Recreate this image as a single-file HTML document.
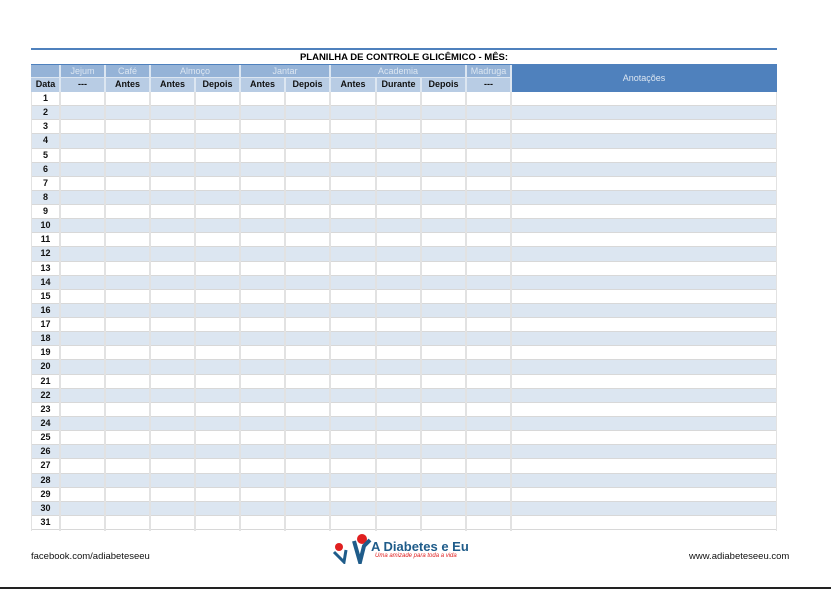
<!DOCTYPE html>
<html><head><meta charset="utf-8"><style>
body{margin:0;width:831px;height:589px;background:#fff;position:relative;overflow:hidden;font-family:"Liberation Sans",sans-serif;}
.a{position:absolute;}
.c{position:absolute;text-align:center;font-size:9px;line-height:13px;}
.r{position:absolute;left:31px;width:746px;height:14.13px;border-bottom:1px solid #d8d8d8;box-sizing:border-box;font-size:9px;font-weight:bold;color:#111;}
.r span{position:absolute;left:0;width:29px;text-align:center;line-height:13px;}
.o{background:#dce6f1;}
.v{position:absolute;top:92px;height:439px;width:2px;background:#e2e2e2;}
.hv{position:absolute;width:2px;background:#dce6f1;}
.h1{background:#95b3d7;color:#dce6f1;top:65px;height:12px;line-height:12px;}
.h2{background:#b8cce4;color:#111;top:77px;height:15px;line-height:15px;font-weight:bold;}
</style></head><body>
<div class="a" style="left:31px;top:48px;width:746px;height:2px;background:#4f81bd"></div>
<div class="a" style="left:31px;top:51px;width:746px;text-align:center;font-size:9.5px;font-weight:bold;line-height:13px">PLANILHA DE CONTROLE GLICÊMICO - MÊS:</div>
<div class="a" style="left:31px;top:64px;width:746px;height:1px;background:#4f81bd"></div>

<div class="c h1" style="left:31px;width:29px"></div>
<div class="c h1" style="left:60px;width:45px">Jejum</div>
<div class="c h1" style="left:105px;width:45px">Café</div>
<div class="c h1" style="left:150px;width:90px">Almoço</div>
<div class="c h1" style="left:240px;width:90px">Jantar</div>
<div class="c h1" style="left:330px;width:136px">Academia</div>
<div class="c h1" style="left:466px;width:45px">Madruga</div>
<div class="c h2" style="left:31px;width:29px">Data</div>
<div class="c h2" style="left:60px;width:45px">---</div>
<div class="c h2" style="left:105px;width:45px">Antes</div>
<div class="c h2" style="left:150px;width:45px">Antes</div>
<div class="c h2" style="left:195px;width:45px">Depois</div>
<div class="c h2" style="left:240px;width:45px">Antes</div>
<div class="c h2" style="left:285px;width:45px">Depois</div>
<div class="c h2" style="left:330px;width:46px">Antes</div>
<div class="c h2" style="left:376px;width:45px">Durante</div>
<div class="c h2" style="left:421px;width:45px">Depois</div>
<div class="c h2" style="left:466px;width:45px">---</div>
<div class="c" style="left:511px;top:65px;width:266px;height:27px;line-height:27px;background:#4f81bd;color:#dce6f1">Anotações</div>

<div class="hv" style="left:59px;top:65px;height:27px"></div>
<div class="hv" style="left:104px;top:65px;height:27px"></div>
<div class="hv" style="left:149px;top:65px;height:27px"></div>
<div class="hv" style="left:194px;top:77px;height:15px"></div>
<div class="hv" style="left:239px;top:65px;height:27px"></div>
<div class="hv" style="left:284px;top:77px;height:15px"></div>
<div class="hv" style="left:329px;top:65px;height:27px"></div>
<div class="hv" style="left:375px;top:77px;height:15px"></div>
<div class="hv" style="left:420px;top:77px;height:15px"></div>
<div class="hv" style="left:465px;top:65px;height:27px"></div>
<div class="hv" style="left:510px;top:65px;height:27px"></div>
<div class="a" style="left:31px;top:77px;width:480px;height:1px;background:#dce6f1"></div>

<div class="r" style="top:92px"><span>1</span></div>
<div class="r o" style="top:106.13px"><span>2</span></div>
<div class="r" style="top:120.26px"><span>3</span></div>
<div class="r o" style="top:134.39px"><span>4</span></div>
<div class="r" style="top:148.52px"><span>5</span></div>
<div class="r o" style="top:162.65px"><span>6</span></div>
<div class="r" style="top:176.78px"><span>7</span></div>
<div class="r o" style="top:190.91px"><span>8</span></div>
<div class="r" style="top:205.04px"><span>9</span></div>
<div class="r o" style="top:219.17px"><span>10</span></div>
<div class="r" style="top:233.3px"><span>11</span></div>
<div class="r o" style="top:247.43px"><span>12</span></div>
<div class="r" style="top:261.56px"><span>13</span></div>
<div class="r o" style="top:275.69px"><span>14</span></div>
<div class="r" style="top:289.82px"><span>15</span></div>
<div class="r o" style="top:303.95px"><span>16</span></div>
<div class="r" style="top:318.08px"><span>17</span></div>
<div class="r o" style="top:332.21px"><span>18</span></div>
<div class="r" style="top:346.34px"><span>19</span></div>
<div class="r o" style="top:360.47px"><span>20</span></div>
<div class="r" style="top:374.6px"><span>21</span></div>
<div class="r o" style="top:388.73px"><span>22</span></div>
<div class="r" style="top:402.86px"><span>23</span></div>
<div class="r o" style="top:416.99px"><span>24</span></div>
<div class="r" style="top:431.12px"><span>25</span></div>
<div class="r o" style="top:445.25px"><span>26</span></div>
<div class="r" style="top:459.38px"><span>27</span></div>
<div class="r o" style="top:473.51px"><span>28</span></div>
<div class="r" style="top:487.64px"><span>29</span></div>
<div class="r o" style="top:501.77px"><span>30</span></div>
<div class="r" style="top:515.9px"><span>31</span></div>

<div class="v" style="left:59px"></div>
<div class="v" style="left:104px"></div>
<div class="v" style="left:149px"></div>
<div class="v" style="left:194px"></div>
<div class="v" style="left:239px"></div>
<div class="v" style="left:284px"></div>
<div class="v" style="left:329px"></div>
<div class="v" style="left:375px"></div>
<div class="v" style="left:420px"></div>
<div class="v" style="left:465px"></div>
<div class="v" style="left:510px"></div>
<div class="v" style="left:776px;width:1px"></div>
<div class="v" style="left:31px;width:1px"></div>

<div class="a" style="left:31px;top:551px;font-size:9.5px;color:#111">facebook.com/adiabeteseeu</div>
<div class="a" style="left:689px;top:551px;font-size:9.5px;color:#111">www.adiabeteseeu.com</div>

<svg class="a" style="left:330px;top:532px" width="42" height="32" viewBox="0 0 42 32">
<circle cx="32" cy="7" r="5" fill="#e02020"/>
<circle cx="9" cy="15" r="4" fill="#e02020"/>
<path d="M24 9 L30 30 L34 14 L40 8" stroke="#1f5c8a" stroke-width="4" fill="none"/>
<path d="M4 20 L14 30 L16 18" stroke="#1f5c8a" stroke-width="3" fill="none"/>
</svg>
<div class="a" style="left:371px;top:539px;font-size:13px;font-weight:bold;color:#1f5c8a;line-height:15px">A Diabetes e Eu</div>
<div class="a" style="left:375px;top:553px;font-size:6px;color:#e02020;font-style:italic">Uma amizade para toda a vida</div>

<div class="a" style="left:0;top:587px;width:831px;height:2px;background:#222"></div>
</body></html>
